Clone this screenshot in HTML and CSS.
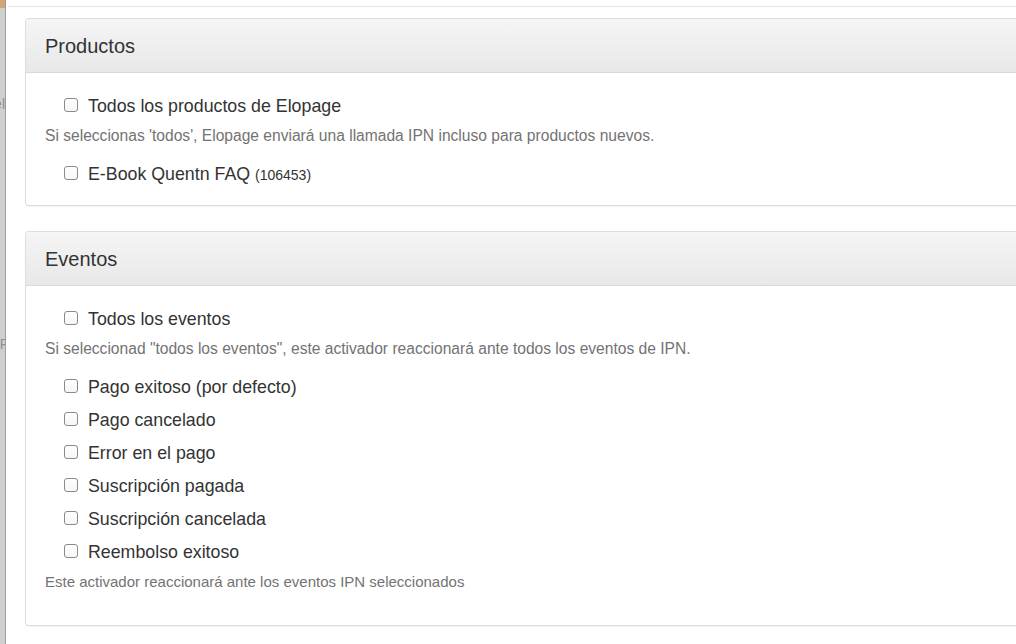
FILE: index.html
```html
<!DOCTYPE html>
<html lang="es">
<head>
<meta charset="utf-8">
<title>IPN</title>
<link rel="stylesheet" href="styles.css">
</head>
<body>
<div class="page">
  <div class="backdrop" aria-hidden="true">
    <div class="backdrop-top"></div>
    <div class="frag frag-1"></div>
    <div class="frag frag-2"></div>
  </div>
  <div class="modal">
    <div class="top-rule"></div>
    <section class="panel panel-products">
      <header class="panel-heading">Productos</header>
      <div class="panel-body">
        <label class="check"><input type="checkbox"><span>Todos los productos de Elopage</span></label>
        <p class="help">Si seleccionas 'todos', Elopage enviará una llamada IPN incluso para productos nuevos.</p>
        <label class="check"><input type="checkbox"><span>E-Book Quentn FAQ <small>(106453)</small></span></label>
      </div>
    </section>
    <section class="panel panel-events">
      <header class="panel-heading">Eventos</header>
      <div class="panel-body">
        <label class="check"><input type="checkbox"><span>Todos los eventos</span></label>
        <p class="help">Si seleccionad "todos los eventos", este activador reaccionará ante todos los eventos de IPN.</p>
        <div class="check-list">
          <label class="check"><input type="checkbox"><span>Pago exitoso (por defecto)</span></label>
          <label class="check"><input type="checkbox"><span>Pago cancelado</span></label>
          <label class="check"><input type="checkbox"><span>Error en el pago</span></label>
          <label class="check"><input type="checkbox"><span>Suscripción pagada</span></label>
          <label class="check"><input type="checkbox"><span>Suscripción cancelada</span></label>
          <label class="check"><input type="checkbox"><span>Reembolso exitoso</span></label>
        </div>
        <p class="help help-footer">Este activador reaccionará ante los eventos IPN seleccionados</p>
      </div>
    </section>
  </div>
</div>
</body>
</html>
```

FILE: styles.css
```css
html, body {
  margin: 0;
  padding: 0;
  background: #ffffff;
}

body {
  font-family: "Liberation Sans", Arial, Helvetica, sans-serif;
  color: #333333;
  overflow: hidden;
}

.page {
  display: flex;
  width: 1016px;
  height: 644px;
  overflow: hidden;
}

.backdrop {
  width: 5px;
  flex: 0 0 5px;
  background: #cfcfcf;
  border-right: 1px solid #9c9c9c;
  display: flex;
  flex-direction: column;
  overflow: hidden;
}

.backdrop-top {
  height: 8px;
  background: #d6a577;
}

.frag {
  height: 16px;
  position: relative;
  overflow: hidden;
}

.frag::before {
  position: absolute;
  right: 0;
  top: 0;
  white-space: nowrap;
  font-size: 14px;
  line-height: 16px;
  color: #8f8f8f;
}

.frag-1 {
  margin-top: 88px;
}

.frag-1::before {
  content: "Nivel";
}

.frag-2 {
  margin-top: 224px;
}

.frag-2::before {
  content: "IPN P";
  right: -4px;
}

.modal {
  flex: 1;
  min-width: 0;
  padding-left: 19px;
  overflow: hidden;
}

.top-rule {
  height: 6px;
  border-bottom: 1px solid #e6e6e6;
  margin-left: -17px;
}

.panel {
  border: 1px solid #dddddd;
  border-right: none;
  border-radius: 4px 0 0 4px;
  margin-right: -20px;
  background: #ffffff;
  box-shadow: 0 1px 1px rgba(0, 0, 0, 0.04);
}

.panel-products {
  margin-top: 11px;
}

.panel-events {
  margin-top: 25px;
}

.panel-heading {
  height: 54px;
  box-sizing: border-box;
  padding: 0 19px;
  display: flex;
  align-items: center;
  font-size: 20px;
  line-height: 22px;
  color: #333333;
  background: linear-gradient(to bottom, #f5f5f5 0%, #e8e8e8 100%);
  border-bottom: 1px solid #d9d9d9;
  border-radius: 4px 0 0 0;
}

.panel-body {
  padding: 23px 19px 21px;
  display: flex;
  flex-direction: column;
}

.panel-events .panel-body {
  padding-bottom: 33px;
}

.check {
  display: flex;
  align-items: center;
  height: 20px;
  padding-left: 19px;
  font-size: 17.8px;
  line-height: 20px;
  color: #333333;
}

.check small {
  font-size: 14px;
}

.check input {
  appearance: none;
  -webkit-appearance: none;
  width: 14px;
  height: 14px;
  margin: -3px 10px 0 0;
  box-sizing: border-box;
  border: 1px solid #8a8a8a;
  border-radius: 3px;
  background: linear-gradient(to bottom, #ffffff 0%, #f6f6f6 100%);
  flex: 0 0 14px;
}

.help {
  margin: 10px 0 18px;
  font-size: 15.6px;
  line-height: 20px;
  color: #737373;
}

.check-list {
  display: flex;
  flex-direction: column;
  gap: 13px;
}

.panel-events .help.help-footer {
  margin: 10px 0 0;
  font-size: 15px;
}
```
